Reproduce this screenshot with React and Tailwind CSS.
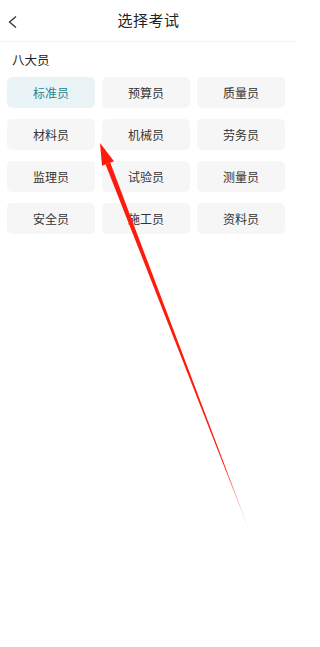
import React from "react";

const items = [
  "标准员", "预算员", "质量员",
  "材料员", "机械员", "劳务员",
  "监理员", "试验员", "测量员",
  "安全员", "施工员", "资料员",
];

export default function App() {
  return (
    <div
      className="relative w-[297px] h-[647px] bg-white overflow-hidden"
      style={{ fontFamily: '"Noto Sans CJK SC", "Noto Sans", sans-serif' }}
    >
      <div className="relative h-[42px] flex items-center justify-center border-b border-[#f3f3f3]">
        <svg className="absolute left-[7px] top-[15px]" width="12" height="14" viewBox="0 0 12 14">
          <path d="M9 1.5 L2.5 7 L9 12.5" fill="none" stroke="#333" strokeWidth="1.3" />
        </svg>
        <span className="text-[15px] text-[#222] tracking-[0.5px]">选择考试</span>
      </div>
      <div className="px-[12px] pt-[9px] pb-[8px] text-[12.5px] text-[#222] leading-[18px]">八大员</div>
      <div className="grid grid-cols-3 gap-x-[7px] gap-y-[11px] pl-[7px] pr-[12px]">
        {items.map((t, i) => (
          <div
            key={t}
            className={
              i === 0
                ? "h-[31px] rounded-[5px] bg-[#eaf4f6] flex items-center justify-center text-[12px] text-[#2b8293]"
                : "h-[31px] rounded-[5px] bg-[#f6f6f6] flex items-center justify-center text-[12px] text-[#333]"
            }
          >
            {t}
          </div>
        ))}
      </div>
      <svg className="absolute left-0 top-0 pointer-events-none" width="297" height="647" viewBox="0 0 297 647">
        <defs>
          <linearGradient id="fade" x1="100" y1="143" x2="253" y2="540" gradientUnits="userSpaceOnUse">
            <stop offset="0" stopColor="#ff1a0e" />
            <stop offset="0.8" stopColor="#ff1a0e" />
            <stop offset="1" stopColor="#ff1a0e" stopOpacity="0" />
          </linearGradient>
        </defs>
        <polygon points="110.2,162.6 105.6,164.4 253,540" fill="url(#fade)" />
        <polygon points="100,143 114,161.2 102,165.8" fill="#ff1a0e" />
      </svg>
    </div>
  );
}
